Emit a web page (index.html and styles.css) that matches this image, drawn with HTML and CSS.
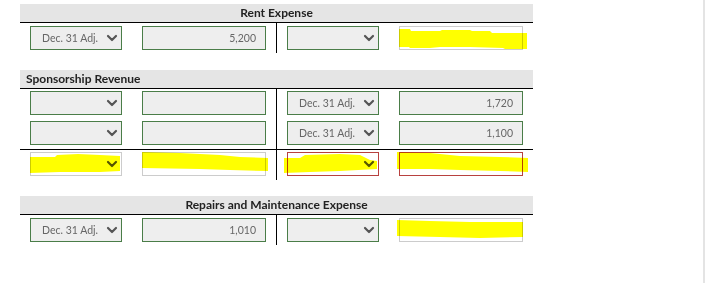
FILE: index.html
```html
<!DOCTYPE html>
<html>
<head>
<meta charset="utf-8">
<link rel="stylesheet" href="styles.css">
</head>
<body>
<div class="page">
  <section class="taccount first">
    <div class="t-head center">Rent Expense</div>
    <div class="t-body">
      <div class="side left">
        <div class="entry">
          <div class="sel ok"><span class="lbl">Dec. 31 Adj.</span><svg class="chev" viewBox="0 0 10 6"><polyline points="1,1 5,5 9,1"/></svg></div>
          <div class="inp ok">5,200</div>
        </div>
      </div>
      <div class="side right">
        <div class="entry">
          <div class="sel ok"><span class="lbl"></span><svg class="chev" viewBox="0 0 10 6"><polyline points="1,1 5,5 9,1"/></svg></div>
          <div class="inp blank"></div>
        </div>
      </div>
    </div>
  </section>

  <section class="taccount second">
    <div class="t-head">Sponsorship Revenue</div>
    <div class="t-body">
      <div class="side left">
        <div class="entry">
          <div class="sel ok"><span class="lbl"></span><svg class="chev" viewBox="0 0 10 6"><polyline points="1,1 5,5 9,1"/></svg></div>
          <div class="inp ok"></div>
        </div>
        <div class="entry">
          <div class="sel ok"><span class="lbl"></span><svg class="chev" viewBox="0 0 10 6"><polyline points="1,1 5,5 9,1"/></svg></div>
          <div class="inp ok"></div>
        </div>
      </div>
      <div class="side right">
        <div class="entry">
          <div class="sel ok"><span class="lbl">Dec. 31 Adj.</span><svg class="chev" viewBox="0 0 10 6"><polyline points="1,1 5,5 9,1"/></svg></div>
          <div class="inp ok">1,720</div>
        </div>
        <div class="entry">
          <div class="sel ok"><span class="lbl">Dec. 31 Adj.</span><svg class="chev" viewBox="0 0 10 6"><polyline points="1,1 5,5 9,1"/></svg></div>
          <div class="inp ok">1,100</div>
        </div>
      </div>
      <div class="side left total">
        <div class="entry">
          <div class="sel blank"><span class="lbl"></span><svg class="chev" viewBox="0 0 10 6"><polyline points="1,1 5,5 9,1"/></svg></div>
          <div class="inp blank"></div>
        </div>
      </div>
      <div class="side right total">
        <div class="entry">
          <div class="sel bad"><span class="lbl"></span><svg class="chev" viewBox="0 0 10 6"><polyline points="1,1 5,5 9,1"/></svg></div>
          <div class="inp bad"></div>
        </div>
      </div>
    </div>
  </section>

  <section class="taccount third">
    <div class="t-head center">Repairs and Maintenance Expense</div>
    <div class="t-body">
      <div class="side left">
        <div class="entry">
          <div class="sel ok"><span class="lbl">Dec. 31 Adj.</span><svg class="chev" viewBox="0 0 10 6"><polyline points="1,1 5,5 9,1"/></svg></div>
          <div class="inp ok">1,010</div>
        </div>
      </div>
      <div class="side right">
        <div class="entry">
          <div class="sel ok"><span class="lbl"></span><svg class="chev" viewBox="0 0 10 6"><polyline points="1,1 5,5 9,1"/></svg></div>
          <div class="inp blank"></div>
        </div>
      </div>
    </div>
  </section>

  <svg class="marks" viewBox="0 0 706 283" width="706" height="283">
    <polygon points="399,29 410,29 411,31 440,31 442,30 470,30 472,31 490,31 492,33 527,33 527,49 505,49 503,48 470,47 440,47 430,48 410,48 409,47 399,47"/>
    <polygon points="30,157 55,157 57,155 78,154 100,155 120,156 120,171 100,172 60,172 30,173"/>
    <polygon points="142,152 180,153 220,155 240,157 268,158 268,171 230,170 200,169 142,168"/>
    <polygon points="284,158 300,158 305,155 340,154 360,155 370,160 377,161 377,169 340,171 310,172 284,173"/>
    <polygon points="397,152 430,153 460,156 500,157 528,158 528,172 500,171 460,170 430,169 397,169"/>
    <polygon points="397,220 430,221 470,222 523,222 523,237 480,238 440,237 397,236"/>
  </svg>
</div>
</body>
</html>
```

FILE: styles.css
```css
* { box-sizing: border-box; }
html, body { margin: 0; padding: 0; background: #fff; }
body { font-family: Lato, "Open Sans", sans-serif; }

.page {
  position: relative;
  width: 705px;
  height: 283px;
  border-right: 2px solid #e4e4e4;
  padding-left: 20px;
  overflow: hidden;
}

.taccount { width: 513px; }
.taccount.first { margin-top: 4px; }
.taccount.second { margin-top: 17px; }
.taccount.third { margin-top: 16px; }

.t-head {
  height: 19px;
  background: #e5e5e5;
  border-bottom: 1px solid #000;
  font-size: 12px;
  font-weight: 700;
  color: #222;
  line-height: 18px;
  padding-left: 6px;
}
.t-head.center { text-align: center; padding-left: 0; }

.t-body {
  display: grid;
  grid-template-columns: 257px 256px;
}

.side {
  display: flex;
  flex-direction: column;
  gap: 6px;
  padding: 3px 10px 3px;
}
.second .side { padding: 2px 10px 4px; }
.second .side.total { padding: 2px 10px 4px; border-top: 1px solid #000; }
.side.left { border-right: 1px solid #000; }

.entry {
  display: flex;
  gap: 20px;
  height: 24px;
}

.sel, .inp {
  height: 24px;
  border: 1px solid #4a7d48;
  background: #eeeeee;
  font-size: 10.5px;
  color: #666;
}
.sel {
  width: 92px;
  display: flex;
  align-items: center;
  justify-content: space-between;
  padding: 0 4px 0 11px;
}
.inp {
  width: 124px;
  text-align: right;
  line-height: 22px;
  padding-right: 9px;
}
.sel.blank, .inp.blank { border-color: #cccccc; background: #fff; }
.sel.bad, .inp.bad { border-color: #b8413f; background: #fff; }

.chev {
  width: 10px;
  height: 6px;
  overflow: visible;
}
.chev polyline {
  fill: none;
  stroke: #555;
  stroke-width: 2.2;
  stroke-linecap: round;
  stroke-linejoin: round;
}

.marks {
  position: absolute;
  left: 0;
  top: 0;
  pointer-events: none;
  mix-blend-mode: multiply;
}
.marks polygon { fill: #ffff00; }
```
